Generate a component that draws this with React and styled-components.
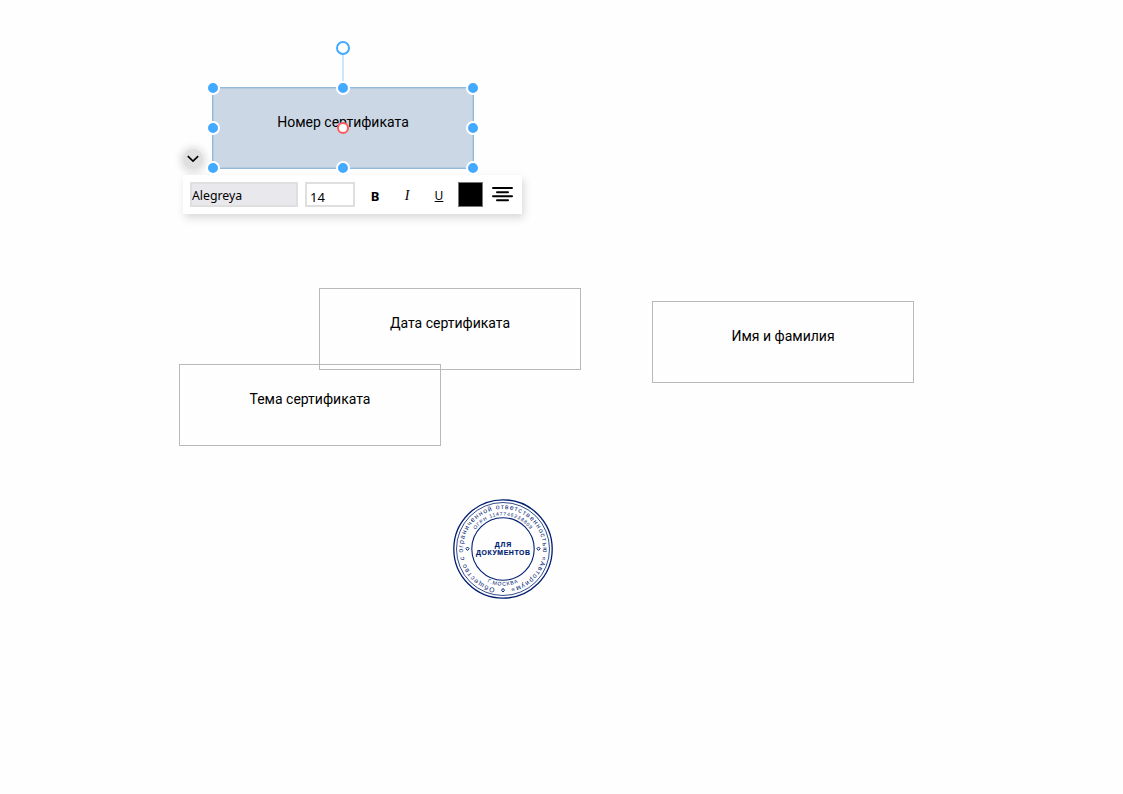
import React from "react";
import styled, { createGlobalStyle, css } from "styled-components";

const GlobalStyle = createGlobalStyle`
  *, *::before, *::after { box-sizing: border-box; }
  body { margin: 0; background: #fefefe; }
`;

const Canvas = styled.main`
  position: relative;
  width: 1123px;
  height: 794px;
  overflow: hidden;
  background: #fefefe;
  color: #000;
  font-family: Roboto, "Liberation Sans", sans-serif;
`;

const Field = styled.div`
  position: absolute;
  left: ${(p) => p.$x}px;
  top: ${(p) => p.$y}px;
  width: 262px;
  height: 82px;
  padding-top: 25px;
  border: 1px solid #b9b9b9;
  text-align: center;
  font-size: 14px;
  line-height: 18px;
  white-space: nowrap;
  ${(p) =>
    p.$selected &&
    css`
      background: #cbd7e5;
      border-color: #93b9d9;
      box-shadow: inset 0 0 0 1px #b4cbe0;
    `}
`;

const Handle = styled.span`
  position: absolute;
  left: ${(p) => p.$x}px;
  top: ${(p) => p.$y}px;
  width: 14px;
  height: 14px;
  margin: -7px 0 0 -7px;
  border: 2px solid #fff;
  border-radius: 50%;
  background: #44aaff;
`;

const RotateHandle = styled(Handle)`
  border-color: #44aaff;
  background: #fff;
`;

const OriginHandle = styled(Handle)`
  width: 12px;
  height: 12px;
  margin: -6px 0 0 -6px;
  border-color: #ff5a5f;
  background: #fff;
`;

const RotateLine = styled.span`
  position: absolute;
  left: 342px;
  top: 54px;
  width: 2px;
  height: 30px;
  background: #cce6fb;
`;

const FloatingPanel = styled.div`
  position: absolute;
  left: 183px;
  top: 149px;
  display: flex;
  flex-direction: column;
  align-items: flex-start;
  gap: 6px;
`;

const CollapseButton = styled.button`
  width: 20px;
  height: 20px;
  display: grid;
  place-items: center;
  padding: 0;
  border: 0;
  border-radius: 50%;
  background: #e0e0e0;
  box-shadow: 0 1px 7px 3px #e0e0e0;
`;

const Toolbar = styled.div`
  position: relative;
  width: 339px;
  height: 39px;
  display: flex;
  align-items: flex-start;
  padding: 7px 7px 0;
  background: #fff;
  box-shadow: 2px 4px 8px rgba(0, 0, 0, 0.15);
  font-family: "Noto Sans", sans-serif;
`;

const FontInput = styled.div`
  width: 108px;
  height: 25px;
  border: 2px solid #dfdfdf;
  background: #e8e8ed;
  font-size: 12.3px;
  line-height: 23px;
`;

const SizeInput = styled.div`
  width: 50px;
  height: 25px;
  margin-left: 7px;
  padding-left: 3px;
  border: 2px solid #dfdfdf;
  font-size: 13px;
  line-height: 26px;
`;

const FormatGroup = styled.div`
  display: flex;
  margin-left: 4px;
`;

const Format = styled.button`
  width: 32px;
  height: 25px;
  padding: 3px 0 0;
  border: 0;
  background: none;
  color: #000;
  font: ${(p) => p.$font};
  line-height: 22px;
  text-align: center;
  text-decoration: ${(p) => (p.$underline ? "underline" : "none")};
`;

const Swatch = styled.div`
  width: 25px;
  height: 25px;
  margin-left: 3px;
  border: 1px solid #777;
  background: #000;
`;

const AlignIcon = styled.svg`
  width: 22px;
  height: 16px;
  margin: 4px 0 0 8px;
`;

const StampImage = styled.svg`
  position: absolute;
  left: 453px;
  top: 499px;
  width: 100px;
  height: 100px;
  fill: #001d70;
  font-family: "Liberation Sans", sans-serif;
`;

const handles = [
  [213, 88], [343, 88], [473, 88],
  [213, 128], [473, 128],
  [213, 168], [343, 168], [473, 168],
];

function Stamp() {
  return (
    <StampImage viewBox="0 0 100 100">
      <defs>
        <path id="outer-ring" d="M50 90A40 40 0 0 1 50 10A40 40 0 0 1 50 90" />
        <path id="inner-top" d="M16.5 50A33.5 33.5 0 0 1 83.5 50" />
        <path id="inner-bottom" d="M13.3 50A36.7 36.7 0 0 0 86.7 50" />
      </defs>
      <g fill="none" stroke="#001d70">
        <circle cx="50" cy="50" r="49.2" strokeWidth="1.3" />
        <circle cx="50" cy="50" r="46.5" strokeWidth="0.8" />
        <circle cx="50" cy="50" r="31.2" strokeWidth="1.1" />
        <g strokeWidth="1">
          <path d="M50 89.4L51.5 91.2L50 93L48.5 91.2Z" />
          <path d="M14.5 48L16.1 49.7L14.5 51.4L12.9 49.7Z" />
          <path d="M85.5 48L87.1 49.7L85.5 51.4L83.9 49.7Z" />
        </g>
      </g>
      <text fontSize="6.8">
        <textPath href="#outer-ring" startOffset="8" textLength="235" lengthAdjust="spacing">
          Общество с ограниченной ответственностью «Авториум»
        </textPath>
      </text>
      <text fontSize="5" textAnchor="middle" letterSpacing="0.75">
        <textPath href="#inner-top" startOffset="50%">ОГРН 1147746238809</textPath>
      </text>
      <text fontSize="5.2" textAnchor="middle" letterSpacing="0.9">
        <textPath href="#inner-bottom" startOffset="50%">Г.МОСКВА</textPath>
      </text>
      <g fontSize="6.9" fontWeight="700" textAnchor="middle" stroke="#001d70" strokeWidth="0.15">
        <text x="50" y="48" textLength="16.5">ДЛЯ</text>
        <text x="50" y="55.9" textLength="54">ДОКУМЕНТОВ</text>
      </g>
    </StampImage>
  );
}

export default function App() {
  return (
    <>
      <GlobalStyle />
      <Canvas>
        <Field $x={319} $y={288}>Дата сертификата</Field>
        <Field $x={652} $y={301}>Имя и фамилия</Field>
        <Field $x={179} $y={364}>Тема сертификата</Field>
        <Field $x={212} $y={87} $selected>Номер сертификата</Field>
        <Stamp />
        <FloatingPanel>
          <CollapseButton aria-label="Collapse">
            <svg width="14" height="8" viewBox="0 0 14 8" fill="none" stroke="#000" strokeWidth="1.7">
              <path d="M1.8 1.2L7 6L12.2 1.2" />
            </svg>
          </CollapseButton>
          <Toolbar>
            <FontInput>Alegreya</FontInput>
            <SizeInput>14</SizeInput>
            <FormatGroup>
              <Format $font='700 13px "Noto Sans", sans-serif'>B</Format>
              <Format $font='italic 14px "Liberation Serif", serif'>I</Format>
              <Format $font='12px "Noto Sans", sans-serif' $underline>U</Format>
            </FormatGroup>
            <Swatch />
            <AlignIcon viewBox="0 0 22 16" stroke="#000" strokeWidth="2" strokeLinecap="round">
              <path d="M2 2H21M6 6.2H17M2 10.2H21M6 14.3H17" />
            </AlignIcon>
          </Toolbar>
        </FloatingPanel>
        <RotateLine />
        {handles.map(([x, y]) => (
          <Handle key={`${x}-${y}`} $x={x} $y={y} />
        ))}
        <RotateHandle $x={343} $y={48} />
        <OriginHandle $x={343} $y={128} />
      </Canvas>
    </>
  );
}
